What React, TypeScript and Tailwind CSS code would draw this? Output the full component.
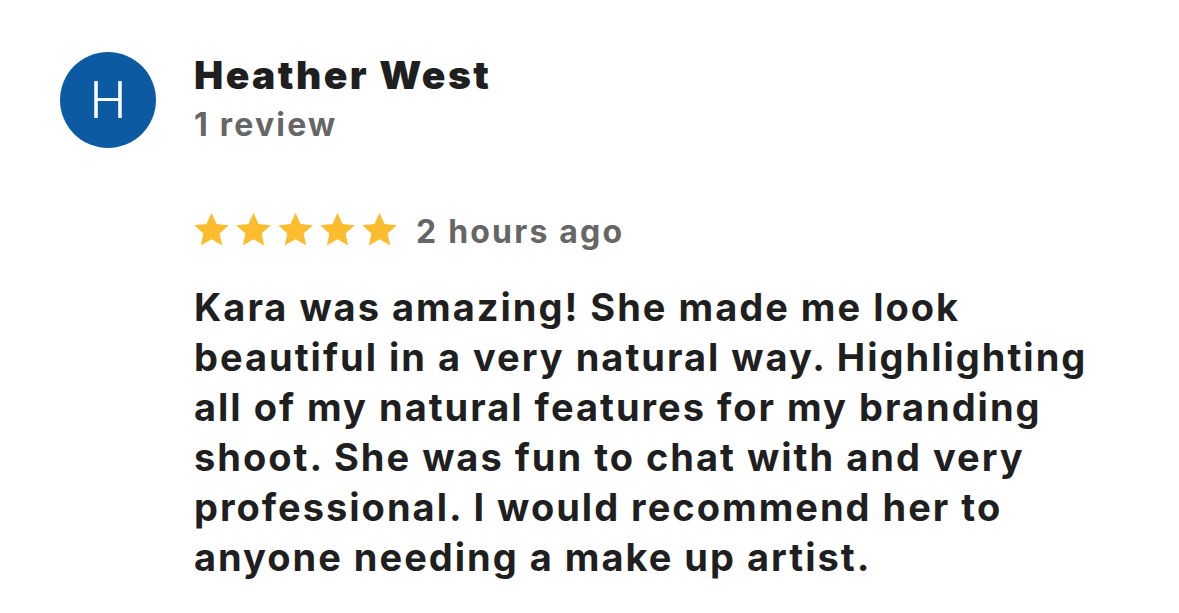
import React from 'react';

function Star() {
  return (
    <svg viewBox="0 0 24 24" className="w-[41px] h-[41px]" fill="#fbbc2d">
      <path d="M12 2.2l2.95 6.55 7.15.75-5.35 4.8 1.5 7.05L12 17.75l-6.25 3.6 1.5-7.05L1.9 9.5l7.15-.75z" />
    </svg>
  );
}

const lines = [
  'Kara was amazing! She made me look',
  'beautiful in a very natural way. Highlighting',
  'all of my natural features for my branding',
  'shoot. She was fun to chat with and very',
  'professional. I would recommend her to',
  'anyone needing a make up artist.',
];

export default function App() {
  return (
    <div
      className="w-[1179px] h-[613px] bg-white overflow-hidden pl-[60px] pt-[52px]"
      style={{ fontFamily: 'Inter, "Noto Sans", sans-serif' }}
    >
      <div className="flex items-start gap-[38px]">
        <div className="w-[96px] h-[96px] shrink-0 rounded-full bg-[#0b5aa2] flex items-center justify-center">
          <span className="text-white text-[50px] font-light leading-none">H</span>
        </div>
        <div className="flex flex-col">
          <div className="text-[39px] font-black text-[#1f1f1f] leading-[46px] tracking-[2.4px]">
            Heather West
          </div>
          <div className="text-[32px] font-bold text-[#666666] leading-[44px] mt-[5px] tracking-[2.2px]">
            1 review
          </div>
        </div>
      </div>

      <div className="ml-[134px] mt-[64px]">
        <div className="flex items-center">
          <div className="flex items-center gap-[1px] -ml-[3px] -mt-[6px]">
            <Star />
            <Star />
            <Star />
            <Star />
            <Star />
          </div>
          <span className="ml-[16px] text-[32px] font-bold text-[#666666] leading-[40px] tracking-[2.2px]">
            2 hours ago
          </span>
        </div>
        <div className="mt-[30px] text-[38px] font-bold text-[#1f1f1f] leading-[50px] tracking-[2px] whitespace-nowrap">
          {lines.map((l) => (
            <div key={l}>{l}</div>
          ))}
        </div>
      </div>
    </div>
  );
}
